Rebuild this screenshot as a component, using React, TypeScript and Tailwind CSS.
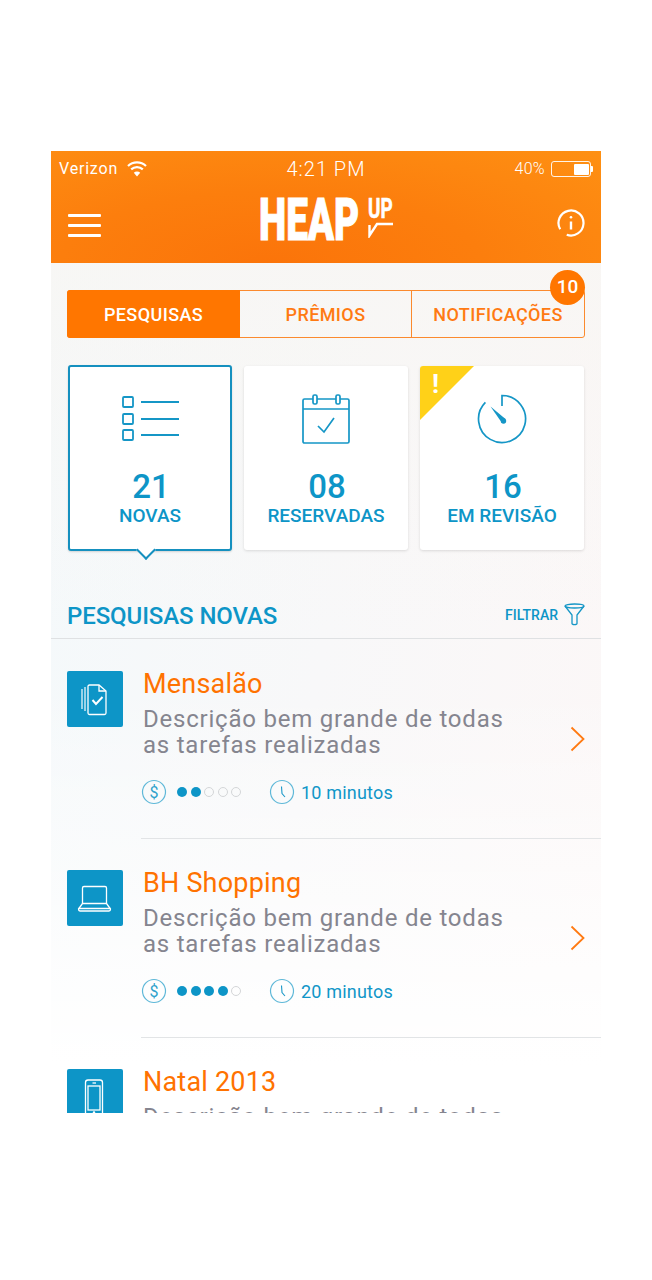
import React from 'react';

const Dollar = () => (
  <svg width="26" height="26" viewBox="0 0 26 26" fill="none" className="shrink-0">
    <circle cx="13" cy="13" r="11.5" stroke="#5fb8d8" strokeWidth="1.2" />
    <text x="13" y="18.5" textAnchor="middle" fontSize="16" fontFamily="Roboto, sans-serif" fill="#2fa2cc">$</text>
  </svg>
);

const Clock = () => (
  <svg width="26" height="26" viewBox="0 0 26 26" fill="none" className="shrink-0">
    <circle cx="13" cy="13" r="11.5" stroke="#5fb8d8" strokeWidth="1.2" />
    <path d="M12.5 7.5 L13 14.5 L16 18" stroke="#1b98c8" strokeWidth="1.1" />
  </svg>
);

const DocsIcon = () => (
  <svg width="56" height="56" viewBox="0 0 56 56" fill="none" stroke="#fff" strokeWidth="1.3">
    <path d="M15 18 V38 M18 16 V40" opacity="0.9" />
    <path d="M21 15.5 C21 14.8 21.5 14 22.5 14 H32 L39 20 V42 C39 43 38.5 43.5 37.5 43.5 H22.5 C21.5 43.5 21 43 21 42 Z" />
    <path d="M32 14 V20 H39" />
    <path d="M25.5 29 L29 33 L35.5 26" strokeWidth="2" />
  </svg>
);

const LaptopIcon = () => (
  <svg width="56" height="56" viewBox="0 0 56 56" fill="none" stroke="#fff" strokeWidth="1.3">
    <path d="M15.5 33.5 V18 C15.5 17 16 16.5 17 16.5 H38 C39 16.5 39.5 17 39.5 18 V33.5" />
    <path d="M15.5 33.5 H39.5 L43.5 39 C43.5 40.5 43 41 42 41 H13 C12 41 11.5 40.5 11.5 39 Z" />
    <path d="M11.5 38.5 H43.5" />
  </svg>
);

const PhoneIcon = () => (
  <svg width="56" height="56" viewBox="0 0 56 56" fill="none" stroke="#fff" strokeWidth="1.3">
    <rect x="18.5" y="11" width="17" height="35" rx="2.5" />
    <rect x="21" y="17" width="12" height="24" />
    <path d="M25.5 14 H29" />
    <circle cx="27" cy="43.6" r="0.6" />
  </svg>
);

const Row = ({ icon, title, filled, time, last }: { icon: React.ReactNode; title: string; filled: number; time: string; last?: boolean }) => (
  <div className="flex pl-[16px]">
    <div className="w-[56px] h-[56px] mt-[31px] bg-[#0d95c7] rounded-[2px] shrink-0">{icon}</div>
    <div className={`ml-[18px] flex-1 h-[199px] pt-[27px] relative ${last ? '' : 'border-b border-[#e2e4e6]'}`}>
      <div className="text-[27px] leading-[34px] text-[#ff7200] tracking-[0.2px] pl-[2px]">{title}</div>
      <div className="mt-[5px] text-[24px] leading-[26px] text-[#85858f] tracking-[0.78px] pl-[2px]">
        Descrição bem grande de todas<br />as tarefas realizadas
      </div>
      <div className="flex items-center mt-[21px] h-[26px]">
        <Dollar />
        <div className="flex ml-[10px] gap-[3.5px]">
          {[0, 1, 2, 3, 4].map(i =>
            i < filled ? (
              <span key={i} className="w-[10px] h-[10px] rounded-full bg-[#0d95c7]" />
            ) : (
              <span key={i} className="w-[10px] h-[10px] rounded-full border border-[#d4d6d8]" />
            )
          )}
        </div>
        <div className="ml-[28px]"><Clock /></div>
        <span className="ml-[6px] text-[18px] text-[#1096c8] tracking-[0.2px]">{time}</span>
      </div>
      <svg width="16" height="26" viewBox="0 0 16 26" fill="none" className="absolute right-[15px] top-[86px]">
        <path d="M1.5 1.5 L13.5 13 L1.5 24.5" stroke="#ff7a12" strokeWidth="1.8" />
      </svg>
    </div>
  </div>
);

const Stat = ({ icon, value, label, active, flag }: { icon: React.ReactNode; value: string; label: string; active?: boolean; flag?: boolean }) => (
  <div className={`relative w-[164px] rounded-[3px] bg-white flex flex-col items-center ${active ? 'h-[186px] border-2 border-[#1590bf] shadow-[0_1px_2px_rgba(0,0,0,0.15)]' : 'h-[184px] mt-[1px] shadow-[0_1px_3px_rgba(0,0,0,0.13)]'}`}>
    {flag && (
      <>
        <div className="absolute left-0 top-0 w-[54px] h-[54px] bg-[#ffd118] rounded-tl-[3px] [clip-path:polygon(0_0,100%_0,0_100%)]" />
        <span className="absolute left-[12px] top-[5px] text-[26px] leading-[26px] font-bold text-white">!</span>
      </>
    )}
    <div className={active ? 'mt-[29px] h-[51px]' : 'mt-[28px] h-[53px]'}>{icon}</div>
    <div className="mt-[21px] text-[33px] leading-[38px] font-medium text-[#0d95c7] pl-[2px]">{value}</div>
    <div className="-mt-px text-[19px] leading-[22px] font-medium text-[#0d95c7]">{label}</div>
    {active && (
      <div className="absolute left-[69px] top-[176px] w-[14px] h-[14px] bg-white border-r-2 border-b-2 border-[#1590bf] rotate-45" />
    )}
  </div>
);

export default function App() {
  return (
    <div className="min-h-[1280px] bg-white pt-[151px] pl-[51px] font-['Roboto',sans-serif]">
      <div className="w-[550px] h-[962px] overflow-hidden bg-[linear-gradient(to_bottom,#f8f6f3_0%,#f8f6f300_50%,#ffffff00_55%,#ffffff_95%),linear-gradient(100deg,#f4f9fb_0%,#fcf7f7_100%)]">
        {/* header */}
        <div className="h-[112px] bg-[radial-gradient(ellipse_at_40%_100%,#fb740a_0%,#fc7e0d_45%,#fe9013_100%)]">
          <div className="flex items-center justify-between h-[36px] px-[8px] text-white relative">
            <div className="flex items-center gap-[9px] text-[16px] tracking-[0.8px]">
              Verizon
              <svg width="20" height="16" viewBox="0 0 20 16" fill="none" stroke="#fff" strokeWidth="2.2">
                <path d="M1 5 A13 13 0 0 1 19 5" />
                <path d="M4.2 8.4 A8.5 8.5 0 0 1 15.8 8.4" />
                <path d="M10 15.5 L6.8 11.8 A4.6 4.6 0 0 1 13.2 11.8 Z" fill="#fff" stroke="none" />
              </svg>
            </div>
            <div className="absolute left-0 right-0 text-center text-[20px] tracking-[1px] font-light">4:21 PM</div>
            <div className="flex items-center gap-[6px] text-[16px] font-light tracking-[0.3px]">
              40%
              <div className="flex items-center">
                <div className="w-[40px] h-[16px] rounded-[3px] border border-white/90 flex justify-end p-[1.5px]">
                  <div className="w-[15px] bg-white rounded-[1px]" />
                </div>
                <div className="w-[2px] h-[6px] bg-white rounded-r-[1px]" />
              </div>
            </div>
          </div>
          <div className="flex items-center justify-between h-[76px] pl-[17px] pr-[16px]">
            <div className="flex flex-col gap-[7px] w-[33px]">
              <div className="h-[3px] bg-white rounded-[1px]" />
              <div className="h-[3px] bg-white rounded-[1px]" />
              <div className="h-[3px] bg-white rounded-[1px]" />
            </div>
            {/* logo */}
            <div className="flex w-[132px] h-[44px] text-white -mt-[10px]">
              <div className="w-[107px] h-[44px] -ml-[2px] mr-[2px]">
                <div className="text-[59px] leading-[44px] font-black whitespace-nowrap origin-left scale-x-[0.655] [-webkit-text-stroke:1px_#fff]">HEAP</div>
              </div>
              <div className="w-[25px] flex flex-col">
                <div className="h-[23px] text-[27px] leading-[23px] font-bold whitespace-nowrap origin-left scale-x-[0.7] [-webkit-text-stroke:0.6px_#fff]">UP</div>
                <svg width="26" height="17" viewBox="0 0 26 17" fill="none" stroke="#fff" strokeWidth="2.4">
                  <path d="M1.5 4 V14.5 L9 3 H25" />
                </svg>
              </div>
            </div>
            <div className="w-[33px] flex justify-end -mt-[4px]">
              <svg width="28" height="28" viewBox="0 0 28 28" fill="none" stroke="#fff" strokeWidth="2.2">
                <path d="M3.17 20.25 A12.5 12.5 0 1 1 9.72 25.75" />
                <path d="M14 12.5 V20.5" strokeWidth="2.4" />
                <circle cx="14" cy="8.2" r="1.3" fill="#fff" stroke="none" />
              </svg>
            </div>
          </div>
        </div>

        {/* tabs */}
        <div className="relative mt-[27px] mx-[16px] flex h-[48px] rounded-[3px] border border-[#fb8a2e] text-[18px] font-medium tracking-[0.4px]">
          <div className="w-[173px] -m-px mr-0 bg-[#ff7600] rounded-l-[3px] text-white flex items-center justify-center">PESQUISAS</div>
          <div className="w-[172px] border-r border-[#fb8a2e] text-[#ff7a12] flex items-center justify-center">PRÊMIOS</div>
          <div className="flex-1 text-[#ff7a12] flex items-center justify-center">NOTIFICAÇÕES</div>
          <div className="absolute right-[-1px] top-[-21px] w-[35px] h-[35px] rounded-full bg-[#ff7600] text-white text-[19px] tracking-normal flex items-center justify-center">10</div>
        </div>

        {/* stats */}
        <div className="flex gap-[12px] mt-[27px] ml-[17px]">
          <Stat
            active
            value="21"
            label="NOVAS"
            icon={
              <svg width="58" height="46" viewBox="0 0 58 46" fill="none" stroke="#1596c6" strokeWidth="1.8">
                <rect x="2" y="1" width="10" height="10" rx="1" />
                <rect x="2" y="18" width="10" height="10" rx="1" />
                <rect x="2" y="34" width="10" height="10" rx="1" />
                <path d="M20 6 H58 M20 23 H58 M20 39 H58" />
              </svg>
            }
          />
          <Stat
            value="08"
            label="RESERVADAS"
            icon={
              <svg width="50" height="50" viewBox="0 0 50 50" fill="none" stroke="#1596c6" strokeWidth="1.7">
                <rect x="2" y="5" width="46" height="44" rx="1.5" />
                <path d="M2 15 H48" />
                <rect x="12" y="1" width="4" height="9" rx="1.5" fill="#fff" />
                <rect x="35" y="1" width="4" height="9" rx="1.5" fill="#fff" />
                <path d="M17 32 L23 38 L33 24" />
              </svg>
            }
          />
          <Stat
            flag
            value="16"
            label="EM REVISÃO"
            icon={
              <svg width="50" height="50" viewBox="0 0 50 50" fill="none" stroke="#1596c6" strokeWidth="1.7">
                <path d="M25 12 V1.5 A23.5 23.5 0 1 1 8.4 8.4" />
                <path d="M13.5 12.5 L28.5 25 L25 29 Z" fill="#1596c6" stroke="none" />
                <circle cx="26.5" cy="27" r="2.7" fill="#1596c6" stroke="none" />
              </svg>
            }
          />
        </div>

        {/* section title */}
        <div className="mt-[44px] flex items-center justify-between h-[44px] pb-[2px] pl-[16px] pr-[16px] border-b border-[#dfe1e3]">
          <span className="text-[24px] font-medium text-[#0d95c7] tracking-[-0.1px]">PESQUISAS NOVAS</span>
          <div className="flex items-center gap-[6px]">
            <span className="text-[14px] text-[#0d95c7] font-medium">FILTRAR</span>
            <svg width="21" height="23" viewBox="0 0 21 23" fill="none" stroke="#1596c6" strokeWidth="1.3" className="-mt-[2px]">
              <ellipse cx="10.5" cy="3" rx="9.5" ry="2" />
              <path d="M1 3 L8 12 V20.5 C8 22 13 22 13 20.5 V12 L20 3" />
            </svg>
          </div>
        </div>

        {/* list */}
        <div className="pt-px">
          <Row icon={<DocsIcon />} title="Mensalão" filled={2} time="10 minutos" />
          <Row icon={<LaptopIcon />} title="BH Shopping" filled={4} time="20 minutos" />
          <Row icon={<PhoneIcon />} title="Natal 2013" filled={3} time="15 minutos" last />
        </div>
      </div>
    </div>
  );
}
